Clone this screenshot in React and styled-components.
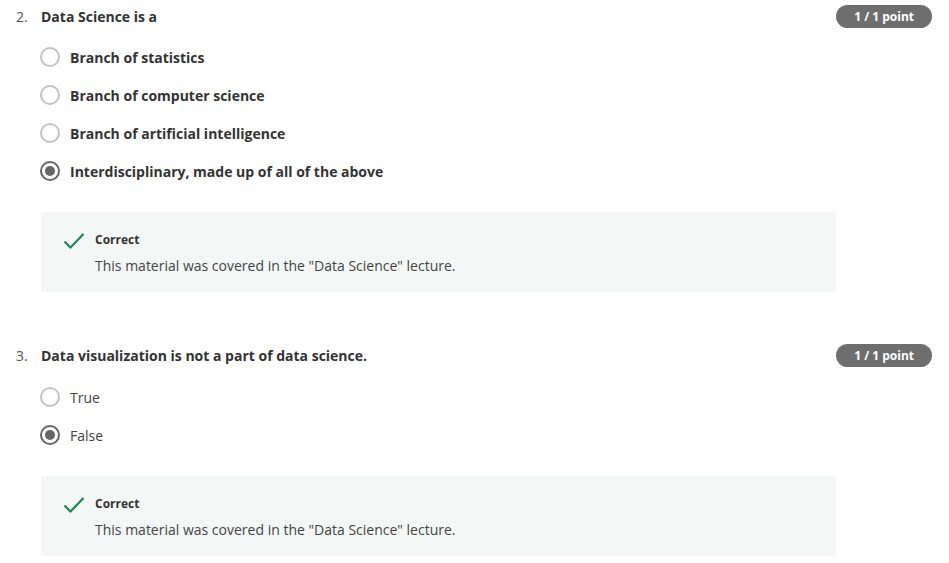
import React from "react";
import styled, { createGlobalStyle } from "styled-components";

const Global = createGlobalStyle`
  html, body { margin: 0; padding: 0; background: #ffffff; }
  body { font-family: "Open Sans", "Noto Sans", sans-serif; color: #333; }
`;

const Page = styled.div`
  padding: 5px 17px 0 16px;
  display: flex;
  flex-direction: column;
`;

const Question = styled.section`
  display: flex;
  flex-direction: column;
  margin-bottom: ${(p) => p.$gapAfter || 0}px;
`;

const Header = styled.div`
  display: flex;
  align-items: center;
  height: 23px;
  margin-bottom: ${(p) => p.$mb}px;
`;

const Num = styled.span`
  width: 25px;
  font-size: 14px;
  color: #555;
`;

const Title = styled.h3`
  flex: 1;
  margin: 0;
  font-size: 14px;
  font-weight: 700;
  color: #333;
`;

const Badge = styled.span`
  height: 23px;
  padding: 0 18px;
  border-radius: 12px;
  background: #6e6e6e;
  color: #fff;
  font-size: 12px;
  font-weight: 700;
  display: flex;
  align-items: center;
`;

const Options = styled.div`
  display: flex;
  flex-direction: column;
  padding-left: 24px;
`;

const Option = styled.label`
  display: flex;
  align-items: center;
  height: 38px;
  gap: 10px;
  font-size: 14px;
  font-weight: ${(p) => (p.$bold ? 700 : 400)};
  color: ${(p) => (p.$bold ? "#333" : "#444")};
`;

const Radio = styled.span`
  box-sizing: border-box;
  width: 20px;
  height: 20px;
  border-radius: 50%;
  border: 2px solid ${(p) => (p.$checked ? "#666" : "#c4c4c4")};
  display: flex;
  align-items: center;
  justify-content: center;
  &::after {
    content: "";
    display: ${(p) => (p.$checked ? "block" : "none")};
    width: 10px;
    height: 10px;
    border-radius: 50%;
    background: #666;
  }
`;

const Feedback = styled.div`
  box-sizing: border-box;
  margin: 22px 0 0 25px;
  width: 795px;
  height: 80px;
  background: #f3f8f6;
  padding: 19px 0 0 22px;
  display: flex;
  gap: 10px;
`;

const CheckIcon = styled.svg`
  width: 22px;
  height: 18px;
  margin-top: 1px;
  flex-shrink: 0;
`;

const FbBody = styled.div`
  display: flex;
  flex-direction: column;
`;

const FbTitle = styled.div`
  font-size: 12px;
  font-weight: 700;
  color: #333;
  line-height: 18px;
`;

const FbText = styled.div`
  margin-top: 7px;
  font-size: 14px;
  color: #444;
  line-height: 20px;
`;

const questions = [
  {
    n: "2.",
    title: "Data Science is a",
    bold: true,
    options: [
      "Branch of statistics",
      "Branch of computer science",
      "Branch of artificial intelligence",
      "Interdisciplinary, made up of all of the above",
    ],
    checked: 3,
    mb: 10,
  },
  {
    n: "3.",
    title: "Data visualization is not a part of data science.",
    bold: false,
    options: ["True", "False"],
    checked: 1,
    mb: 11,
  },
];

export default function App() {
  return (
    <>
      <Global />
      <Page>
        {questions.map((q, qi) => (
          <Question key={q.n} $gapAfter={qi === 0 ? 52 : 0}>
            <Header $mb={q.mb}>
              <Num>{q.n}</Num>
              <Title>{q.title}</Title>
              <Badge>1 / 1 point</Badge>
            </Header>
            <Options>
              {q.options.map((o, i) => (
                <Option key={o} $bold={q.bold}>
                  <Radio $checked={i === q.checked} />
                  {o}
                </Option>
              ))}
            </Options>
            <Feedback>
              <CheckIcon viewBox="0 0 22 18">
                <path d="M1.5 9.5 L7.5 15.5 L20.5 2" fill="none" stroke="#1f8354" strokeWidth="2.2" />
              </CheckIcon>
              <FbBody>
                <FbTitle>Correct</FbTitle>
                <FbText>This material was covered in the "Data Science" lecture.</FbText>
              </FbBody>
            </Feedback>
          </Question>
        ))}
      </Page>
    </>
  );
}
